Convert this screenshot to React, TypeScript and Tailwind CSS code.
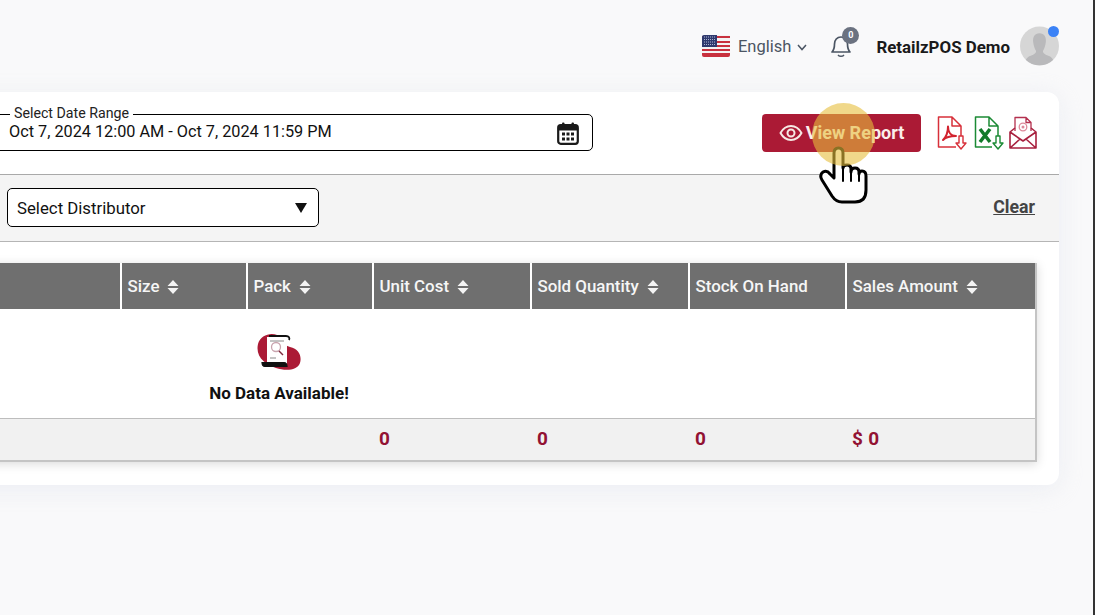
const Sort = () => (
  <svg width="12" height="16" viewBox="0 0 12 16" className="ml-2 shrink-0" fill="#f4f4f4">
    <path d="M6 1 L11.5 7 H0.5 Z M0.5 9 H11.5 L6 15 Z" />
  </svg>
);

const Flag = () => (
  <svg width="28" height="22" viewBox="0 0 28 22" className="shrink-0">
    <rect width="28" height="22" rx="2" fill="#f4f4f4" />
    <rect y="1" width="28" height="2" fill="#c8313e" />
    <rect y="6" width="28" height="2" fill="#c8313e" />
    <rect y="10" width="28" height="2" fill="#c8313e" />
    <rect y="14" width="28" height="2" fill="#c8313e" />
    <rect y="18" width="28" height="2" fill="#c8313e" />
    <path d="M0 20 H28 a2 2 0 0 1-2 2 H2 a2 2 0 0 1-2-2Z" fill="#c8313e" />
    <path d="M2 0 H15 V12 H0 V2 a2 2 0 0 1 2-2Z" fill="#2f3a6e" />
    <path d="M2 2h11M2 4.500h11M2 7h11M2 9.500h11" stroke="#aeb4d2" strokeWidth="1" strokeDasharray="1 1" />
  </svg>
);

const Bell = () => (
  <svg width="22" height="24" viewBox="0 0 22 24" fill="none" stroke="#4b5563" strokeWidth="1.7" strokeLinecap="round" strokeLinejoin="round">
    <path d="M2 18 C4 16 4.500 14 4.500 10 C4.500 6 7 3 11 3 C15 3 17.500 6 17.500 10 C17.500 14 18 16 20 18 Z" />
    <path d="M8.500 21.500 C9.500 22.500 12.500 22.500 13.500 21.500" />
  </svg>
);

const Avatar = () => (
  <div className="relative w-[39px] h-[40px] shrink-0">
    <svg width="39" height="40" viewBox="0 0 40 40">
      <defs>
        <clipPath id="avatar-clip"><circle cx="20" cy="20" r="20" /></clipPath>
      </defs>
      <circle cx="20" cy="20" r="20" fill="#d6d6d6" />
      <g clipPath="url(#avatar-clip)" fill="#b9b9bb">
        <path d="M20 7 C25 7 27 11 26.500 16 C26 20 25 23 23.500 25 C23.500 27 25 28.500 29 30 C33 31.500 35 34 35 40 H5 C5 34 7 31.500 11 30 C15 28.500 16.500 27 16.500 25 C15 23 14 20 13.500 16 C13 11 15 7 20 7Z" />
      </g>
    </svg>
    <div className="absolute top-0 right-0 w-[11px] h-[11px] rounded-full bg-[#3b82f6]" />
  </div>
);

const Calendar = () => (
  <svg width="22" height="23" viewBox="0 0 22 23" className="shrink-0">
    <rect x="1.200" y="3.200" width="19.600" height="18.600" rx="2.500" fill="none" stroke="#1a1a1a" strokeWidth="2.200" />
    <rect x="1" y="3" width="20" height="5.500" fill="#1a1a1a" />
    <rect x="5" y="0.500" width="2.500" height="5" rx="1" fill="#1a1a1a" />
    <rect x="14.500" y="0.500" width="2.500" height="5" rx="1" fill="#1a1a1a" />
    <g fill="#1a1a1a">
      <rect x="5" y="10.500" width="3" height="3" />
      <rect x="9.500" y="10.500" width="3" height="3" />
      <rect x="14" y="10.500" width="3" height="3" />
      <rect x="5" y="15.500" width="3" height="3" />
      <rect x="9.500" y="15.500" width="3" height="3" />
      <rect x="14" y="15.500" width="3" height="3" />
    </g>
  </svg>
);

const Eye = () => (
  <svg width="24" height="24" viewBox="0 0 24 24" fill="none" stroke="#f6e9e4" strokeWidth="2" strokeLinecap="round" strokeLinejoin="round" className="shrink-0">
    <path d="M1.500 12 C4 7.500 7.500 5 12 5 C16.500 5 20 7.500 22.500 12 C20 16.500 16.500 19 12 19 C7.500 19 4 16.500 1.500 12Z" />
    <circle cx="12" cy="12" r="3.500" />
  </svg>
);

const PdfIcon = () => (
  <svg width="30" height="34" viewBox="0 0 30 34" fill="none" strokeLinejoin="round" className="shrink-0">
    <path d="M19 31 H1.500 V1 H15 L24 10 V20 M15 1 V10 H24" stroke="#d8303a" strokeWidth="1.500" />
    <path d="M6 24 C9 21 11 16 11 10.500 C11 16 14 20 19 20 C14 20 9 21 6 24Z" stroke="#d2232f" strokeWidth="2" />
    <path d="M22 20 H26 V27 H29 L24 33 L19 27 H22 Z" stroke="#d8303a" strokeWidth="1.400" fill="#fff" />
  </svg>
);

const XlsIcon = () => (
  <svg width="30" height="34" viewBox="0 0 30 34" fill="none" strokeLinejoin="round" className="shrink-0">
    <path d="M18 31 H1.500 V1 H15 L24 10 V20 M15 1 V10 H24" stroke="#1b8a35" strokeWidth="1.500" />
    <path d="M6 13 L16 26 M16 13 L6 26" stroke="#127a2a" strokeWidth="3.500" />
    <path d="M22 20 H26 V27 H29 L24 33 L19 27 H22 Z" stroke="#1b8a35" strokeWidth="1.400" fill="#fff" />
  </svg>
);

const MailIcon = () => (
  <svg width="28" height="34" viewBox="0 0 28 34" fill="none" strokeLinejoin="round" className="shrink-0">
    <path d="M6 15 V1.500 H17 L22 6.500 V15 M17 1.500 V6.500 H22" stroke="#b4314f" strokeWidth="1.300" />
    <circle cx="14" cy="11" r="3.800" stroke="#dd8a9b" strokeWidth="1.300" />
    <circle cx="14" cy="11" r="1.500" fill="#dd8a9b" />
    <path d="M6 12 L1 16 V32 H27 V16 L22 12 M1 16 L14 25 L27 16 M1 32 L11 23 M27 32 L17 23" stroke="#a8213f" strokeWidth="1.600" />
  </svg>
);

const NoData = () => (
  <svg width="44" height="38" viewBox="0 0 44 38">
    <path d="M1 11 C3 2 14 -1 20 2 C27 6 25 12 33 14 C42 16 45 23 43 30 C40 38 28 38 19 35 C9 32 -2 24 1 11Z" fill="#ab1a35" />
    <path d="M10 4 H30 V31 H10 Z" fill="#fff" />
    <path d="M12 3 H29 C32 3 33 5 32 7" fill="none" stroke="#111" strokeWidth="1.800" />
    <path d="M5 29.500 H27 C29 29.500 30 31 30 33.500 H8 C6 33.500 5 32 5 29.500Z" fill="#111" stroke="#111" strokeWidth="1.200" />
    <circle cx="19" cy="14" r="4.500" fill="none" stroke="#c9a4ae" strokeWidth="1.300" />
    <path d="M22 18 L26 22" stroke="#7d2b3e" strokeWidth="1.500" />
    <path d="M13 8 H27 M13 25 H19" stroke="#888" strokeWidth="1" />
  </svg>
);

const columns = "grid grid-cols-[145px_126px_126px_158px_158px_157px_1fr]";

export default function App() {
  return (
    <div className="relative w-[1095px] h-[615px] overflow-hidden bg-[#f9f9fa] border-r-2 border-[#333333] font-['Roboto',sans-serif] text-black">
      <header className="h-[92px] flex items-center justify-end pr-[34px]">
        <Flag />
        <span className="ml-2 mt-[3px] text-[16.500px] leading-none text-[#4b5563]">English</span>
        <svg width="10" height="7" viewBox="0 0 10 7" className="ml-[6px] mt-[2px]" fill="none" stroke="#4b5563" strokeWidth="1.500">
          <path d="M1 1 L5 5.500 L9 1" />
        </svg>
        <div className="relative ml-[23px] w-[22px] h-[24px]">
          <Bell />
          <span className="absolute -top-[7px] left-[12px] w-[17px] h-[17px] rounded-full bg-[#6b7280] text-white text-[9px] font-bold flex items-center justify-center">0</span>
        </div>
        <span className="ml-[24px] mt-[3px] text-[16.900px] leading-none font-bold text-[#1a1a1a] whitespace-nowrap">RetailzPOS Demo</span>
        <div className="ml-[10px]"><Avatar /></div>
      </header>

      <main className="w-[1099px] -ml-[40px] h-[393px] bg-white rounded-[12px] shadow-[0_4px_24px_rgba(220,225,235,0.45)]">
        <section className="h-[83px] border-b border-[#a9a9a9] flex items-start pt-[16px] pl-[30px]">
          <fieldset className="shrink-0 w-[603px] h-[43px] border border-black rounded-[5px] pl-[18px] pr-[13px] flex">
            <legend className="relative -top-[1px] ml-[1px] px-[4px] text-[14.200px] leading-[13px] text-[#222]">Select Date Range</legend>
            <div className="w-full flex items-center justify-between -mt-[6px]">
              <span className="text-[16.250px] text-[#111] whitespace-nowrap">Oct 7, 2024 12:00 AM - Oct 7, 2024 11:59 PM</span>
              <div className="mt-[2px]"><Calendar /></div>
            </div>
          </fieldset>
          <button className="shrink-0 ml-[169px] mt-[6px] w-[159px] h-[38px] rounded-[4px] bg-[#ab1a35] text-[#fbeeea] text-[18px] font-bold flex items-center justify-center gap-[3px]">
            <Eye />
            <span className="-mt-[2px]">View Report</span>
          </button>
          <div className="shrink-0 ml-[16px] mt-[8px] flex gap-[7px]">
            <PdfIcon />
            <XlsIcon />
            <div className="-ml-[2px]"><MailIcon /></div>
          </div>
        </section>

        <section className="h-[67px] bg-[#f4f4f4] border-b border-[#b5b5b5] flex items-center justify-between pl-[47px] pr-[24px] pb-[2px]">
          <div className="w-[312px] h-[39px] bg-white border border-black rounded-[5px] flex items-center justify-between pl-[9px] pr-[11px]">
            <span className="text-[16.800px] text-[#111] mt-[3px]">Select Distributor</span>
            <svg width="12" height="10" viewBox="0 0 12 10" className="mt-[1px]"><path d="M0 0 H12 L6 10Z" fill="#111" /></svg>
          </div>
          <span className="text-[17.700px] font-bold underline text-[#444] mt-[1px]">Clear</span>
        </section>

        <section className="ml-[17px] mr-[22px] mt-[21px] border-r-2 border-b-2 border-[#c4c4c4] shadow-[0_2px_10px_rgba(0,0,0,0.15)]">
          <div className={`${columns} h-[46px] bg-[#6f6f6f] text-[16.900px] font-medium text-[#f6f6f6]`}>
            <div className="border-r-2 border-white" />
            {["Size", "Pack", "Unit Cost", "Sold Quantity"].map((label) => (
              <div key={label} className="border-r-2 border-white pt-[1px] flex items-center pl-[5.500px]">
                <span className="whitespace-nowrap">{label}</span>
                <Sort />
              </div>
            ))}
            <div className="border-r-2 border-white pt-[1px] flex items-center pl-[5.500px]">
              <span className="whitespace-nowrap">Stock On Hand</span>
            </div>
            <div className="flex items-center pl-[5.500px] pt-[1px]">
              <span className="whitespace-nowrap">Sales Amount</span>
              <Sort />
            </div>
          </div>
          <div className="h-[109px] bg-white w-[604px] flex flex-col items-center pt-[24px]">
            <NoData />
            <span className="mt-[12px] text-[17px] leading-[20px] font-bold text-[#111]">No Data Available!</span>
          </div>
          <div className={`${columns} h-[42px] bg-[#f1f1f1] border-t border-[#bdbdbd] items-center text-[19px] font-bold text-[#921233] tracking-[0.3px]`}>
            <div /><div /><div />
            <div className="pl-[5px]">0</div>
            <div className="pl-[5px]">0</div>
            <div className="pl-[5px]">0</div>
            <div className="pl-[5px]">$ 0</div>
          </div>
        </section>
      </main>

      <svg width="52" height="60" viewBox="818 146 52 60" className="absolute left-[818px] top-[146px]" fill="#fff" stroke="#000" strokeWidth="3" strokeLinejoin="round" strokeLinecap="round">
        <path d="M834 178 L834 153 Q834 148 838.500 148 Q843 148 843 153 L843 168 Q843 165 847 165 Q851 165 851 169 L851 172 Q851 168 855 168 Q859 168 859 172 L859 174 Q859 171 862 171 Q866 171 866 176 L866 190 Q866 202 855 202 L842 202 Q836 202 832 196 L822 180 Q819 175 823 172 Q827 170 830 174 Z" />
        <path d="M843 168 V181 M851 172 V181 M859 174 V181" fill="none" strokeWidth="2" />
      </svg>
      <div className="absolute left-[812px] top-[103px] w-[63px] h-[63px] rounded-full bg-[rgba(230,190,60,0.6)]" />
    </div>
  );
}
